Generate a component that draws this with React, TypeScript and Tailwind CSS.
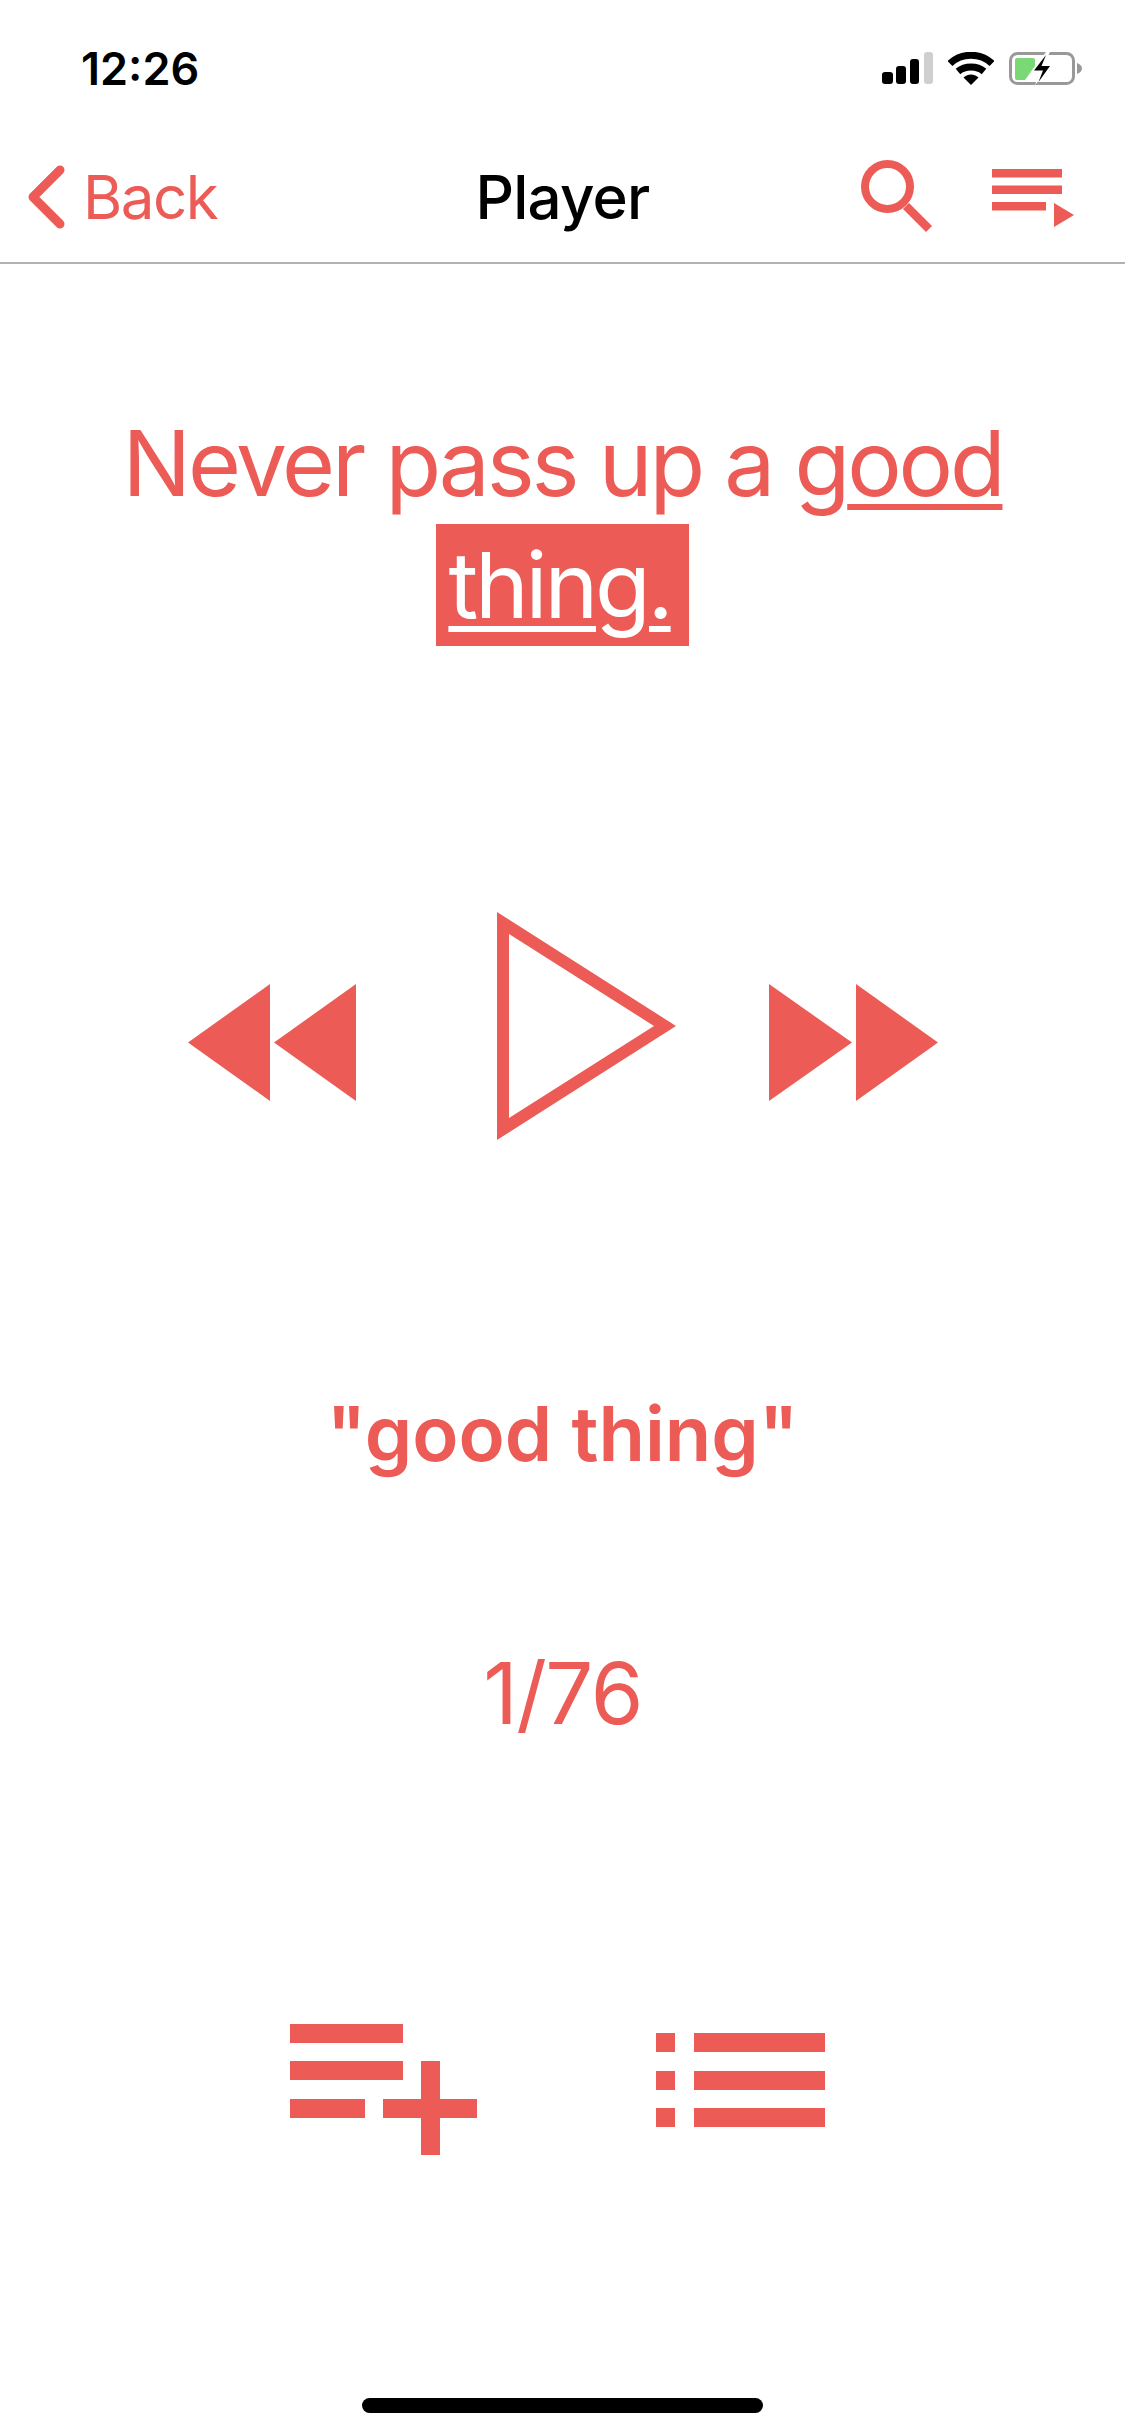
const coral = '#EC5B55';

const StatusIcons = () => (
  <div className="flex items-center">
    <svg width="51" height="32" viewBox="0 0 51 32">
      <rect x="0" y="20" width="11" height="12" rx="3" fill="#000" />
      <rect x="14" y="14" width="10" height="18" rx="3" fill="#000" />
      <rect x="28" y="7" width="9" height="25" rx="3" fill="#000" />
      <rect x="42" y="0" width="9" height="32" rx="3" fill="#cfcfcf" />
    </svg>
    <svg className="ml-[15px]" width="46" height="33" viewBox="0 0 46 33">
      <path d="M2 11.500C13.500 0.500 32.500 0.500 44 11.500" fill="none" stroke="#000" strokeWidth="7" />
      <path d="M10 19.500C17 13.500 29 13.500 36 19.500" fill="none" stroke="#000" strokeWidth="7" />
      <path d="M15.500 25.500C20 21.500 26 21.500 30.500 25.500L23 33Z" fill="#000" />
    </svg>
    <svg className="ml-[15px]" width="73" height="33" viewBox="0 0 73 33">
      <rect x="1.500" y="1.500" width="63" height="30" rx="7" fill="none" stroke="#999" strokeWidth="3" />
      <path d="M68 11C71 12 73 14 73 16.500C73 19 71 21 68 22Z" fill="#999" />
      <path d="M6 8a2 2 0 0 1 2-2h16a2 2 0 0 1 2 2v6l-10 14H8a2 2 0 0 1-2-2Z" fill="#7AD974" />
      <path d="M37 0L22 20H31L26 33L44 12H35L41 0Z" fill="#fff" />
      <path d="M37 3L25 18.500H34L29.500 30L41 14H32.500Z" fill="#000" />
    </svg>
  </div>
);

const SearchIcon = () => (
  <svg width="73" height="73" viewBox="0 0 73 73">
    <circle cx="26.500" cy="26.500" r="22.500" fill="none" stroke={coral} strokeWidth="8" />
    <path d="M45 46L68 69" fill="none" stroke={coral} strokeWidth="8.500" />
  </svg>
);

const QueueIcon = () => (
  <svg className="mt-[3px]" width="82" height="58" viewBox="0 0 82 58">
    <rect x="0" y="0" width="70" height="8.500" fill={coral} />
    <rect x="0" y="16.500" width="70" height="8.500" fill={coral} />
    <rect x="0" y="33" width="54" height="8.500" fill={coral} />
    <path d="M62 34L82 46L62 58Z" fill={coral} />
  </svg>
);

const Rewind = () => (
  <svg width="168" height="117" viewBox="0 0 168 117">
    <path d="M82 0V117L0 58.500Z" fill={coral} />
    <path d="M168 0V117L86 58.500Z" fill={coral} />
  </svg>
);

const Forward = () => (
  <svg width="169" height="117" viewBox="0 0 169 117">
    <path d="M0 0V117L83 58.500Z" fill={coral} />
    <path d="M87 0V117L169 58.500Z" fill={coral} />
  </svg>
);

const PlayOutline = () => (
  <svg width="179" height="228" viewBox="0 0 179 228">
    <path d="M0 0L179 114L0 228ZM12 22V206L157 114Z" fill={coral} fillRule="evenodd" />
  </svg>
);

const AddToListIcon = () => (
  <svg width="187" height="131" viewBox="0 0 187 131">
    <rect x="0" y="0" width="113" height="19" fill={coral} />
    <rect x="0" y="37" width="113" height="19" fill={coral} />
    <rect x="0" y="75" width="75" height="19" fill={coral} />
    <rect x="93" y="75" width="94" height="19" fill={coral} />
    <rect x="131" y="37" width="19" height="94" fill={coral} />
  </svg>
);

const ListIcon = () => (
  <svg width="169" height="94" viewBox="0 0 169 94">
    <rect x="0" y="0" width="19" height="19" fill={coral} />
    <rect x="0" y="38" width="19" height="19" fill={coral} />
    <rect x="0" y="75" width="19" height="19" fill={coral} />
    <rect x="38" y="0" width="131" height="19" fill={coral} />
    <rect x="38" y="38" width="131" height="19" fill={coral} />
    <rect x="38" y="75" width="131" height="19" fill={coral} />
  </svg>
);

export default function App() {
  return (
    <div className="w-[1125px] h-[2436px] bg-white flex flex-col font-['Inter',sans-serif] text-[#EC5B55]">
      <div className="flex items-center justify-between h-[136px] pl-[81px] pr-[43px]">
        <span className="text-[45px] leading-none font-semibold text-black">12:26</span>
        <StatusIcons />
      </div>

      <div className="grid grid-cols-[1fr_auto_1fr] items-center h-[128px] pb-[5px] border-b-2 border-[#b2b2b2]">
        <div className="flex items-center pl-[27px] gap-[18px]">
          <svg width="38" height="66" viewBox="0 0 38 66">
            <path d="M33 6L6 33L33 60" fill="none" stroke={coral} strokeWidth="9" strokeLinecap="round" strokeLinejoin="round" />
          </svg>
          <span className="text-[60px] leading-none font-normal tracking-[-1.500px]">Back</span>
        </div>
        <span className="text-[60px] leading-none font-medium tracking-[-0.800px] text-black">Player</span>
        <div className="flex justify-end items-center pr-[51px] gap-[58px]">
          <SearchIcon />
          <QueueIcon />
        </div>
      </div>

      <p className="mt-[138px] text-center text-[91px] leading-[122px] font-normal tracking-[-3.200px]">
        Never pass up a g<span className="underline decoration-[6px] underline-offset-[8px]">ood</span>
        <br />
        <span className="inline-block bg-[#EC5B55] text-white pl-[12px] pr-[18px] underline decoration-[6px] underline-offset-[8px]">thing.</span>
      </p>

      <div className="mt-[266px] flex justify-center">
        <div className="mt-[72px]"><Rewind /></div>
        <div className="ml-[141px]"><PlayOutline /></div>
        <div className="ml-[93px] mt-[72px]"><Forward /></div>
      </div>

      <p className="mt-[247px] text-center text-[76px] leading-[92px] font-semibold">"good thing"</p>
      <p className="mt-[169px] text-center text-[85px] leading-[92px] font-normal tracking-[-1.500px]">1/76</p>

      <div className="mt-[284px] flex justify-center items-start gap-[179px] pr-[11px]">
        <AddToListIcon />
        <div className="mt-[9px]"><ListIcon /></div>
      </div>

      <div className="mt-auto mb-[23px] self-center w-[401px] h-[15px] rounded-full bg-black" />
    </div>
  );
}
